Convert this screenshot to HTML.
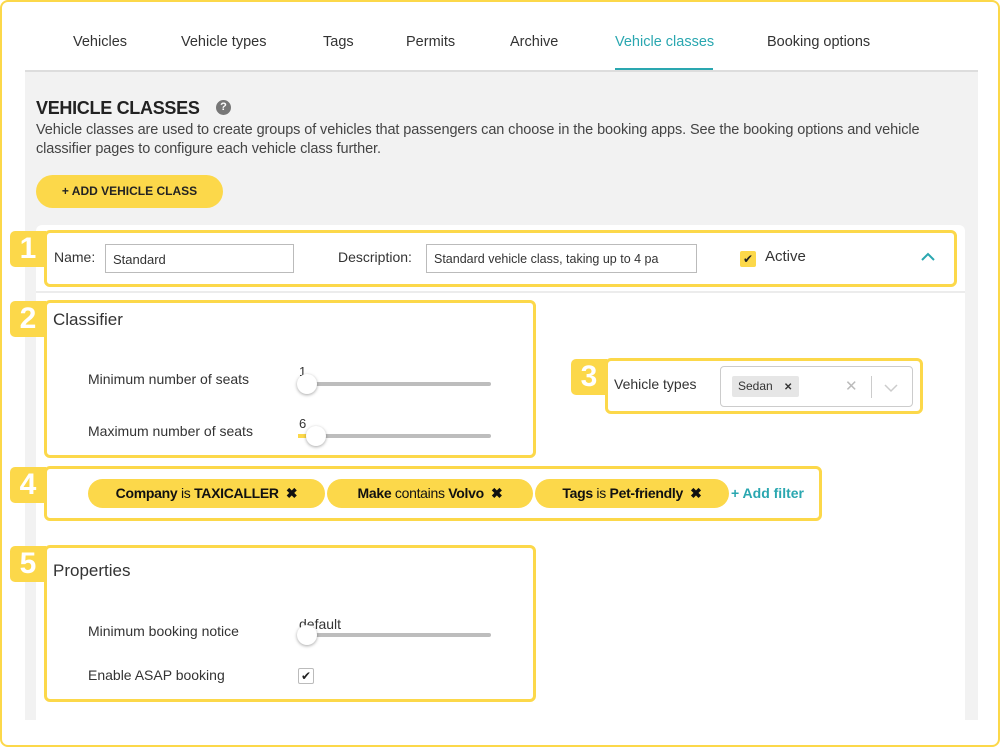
<!DOCTYPE html>
<html><head><meta charset="utf-8"><style>
*{box-sizing:border-box;margin:0;padding:0}
body{width:1000px;height:747px;position:relative;background:#fff;font-family:"Liberation Sans",sans-serif;color:#333;overflow:hidden}
.a{position:absolute;white-space:nowrap}
.frame{left:0;top:0;width:1000px;height:747px;border:2px solid #fcd84a;border-radius:8px}
.tab{top:34px;font-size:14.5px;color:#333}
.yb{border:3px solid #fcd84a;border-radius:6px}
.badge{background:#fcd84a;color:#fff;font-weight:bold;font-size:30px;width:36px;height:36px;text-align:center;line-height:36px;border-radius:5px 0 0 5px}
.lbl{font-size:14px;color:#333}
.track{height:4px;background:#bdbdbd;border-radius:2px}
.knob{width:20px;height:20px;border-radius:50%;background:#fff;box-shadow:0 1px 3px rgba(0,0,0,.35)}
.chip{top:479px;height:29px;background:#fcd84a;border-radius:15px;font-size:14px;color:#111;line-height:29px;text-align:center;letter-spacing:-0.3px}
</style></head><body>
<div class="a frame"></div>
<div class="a tab" style="left:73px">Vehicles</div>
<div class="a tab" style="left:181px">Vehicle types</div>
<div class="a tab" style="left:323px">Tags</div>
<div class="a tab" style="left:406px">Permits</div>
<div class="a tab" style="left:510px">Archive</div>
<div class="a tab" style="left:615px;color:#2aa7b0">Vehicle classes</div>
<div class="a tab" style="left:767px">Booking options</div>
<div class="a" style="left:615px;top:68px;width:98px;height:3px;background:#2aa7b0"></div>
<div class="a" style="left:25px;top:70px;width:953px;height:650px;background:#f2f2f2;border-top:2px solid #ddd"></div>
<div class="a" style="left:36px;top:98px;font-size:18px;font-weight:bold;color:#222;letter-spacing:-0.3px">VEHICLE CLASSES</div>
<div class="a" style="left:216px;top:100px;width:15px;height:15px;border-radius:50%;background:#777;color:#fff;font-size:11px;font-weight:bold;text-align:center;line-height:15px">?</div>
<div class="a" style="left:36px;top:121px;width:930px;font-size:14.5px;line-height:19px;color:#444;white-space:normal;letter-spacing:-0.1px">Vehicle classes are used to create groups of vehicles that passengers can choose in the booking apps. See the booking options and vehicle<br>classifier pages to configure each vehicle class further.</div>
<div class="a" style="left:36px;top:175px;width:187px;height:33px;background:#fcd84a;border-radius:17px;font-size:12px;font-weight:bold;text-align:center;line-height:33px;color:#222">+ ADD VEHICLE CLASS</div>
<div class="a" style="left:36px;top:225px;width:929px;height:495px;background:#fff;border-radius:6px 6px 0 0"></div>
<div class="a" style="left:36px;top:291px;width:929px;height:2px;background:#ececec"></div>
<div class="a badge" style="left:10px;top:231px">1</div>
<div class="a yb" style="left:44px;top:230px;width:913px;height:57px"></div>
<div class="a lbl" style="left:54px;top:249px">Name:</div>
<div class="a" style="left:105px;top:244px;width:189px;height:29px;border:1px solid #bbb;font-size:13px;padding:7px 7px;color:#333">Standard</div>
<div class="a lbl" style="left:338px;top:249px">Description:</div>
<div class="a" style="left:426px;top:244px;width:271px;height:29px;border:1px solid #bbb;font-size:12.5px;padding:7px 7px;color:#333;overflow:hidden">Standard vehicle class, taking up to 4 pa</div>
<div class="a" style="left:740px;top:251px;width:16px;height:16px;background:#fcd84a;border-radius:2px;font-size:12px;text-align:center;line-height:16px;color:#222">✔</div>
<div class="a lbl" style="left:765px;top:248px;font-size:15px">Active</div>
<svg class="a" style="left:920px;top:252px" width="16" height="10"><path d="M2 8 L8 2 L14 8" stroke="#2aa7b0" stroke-width="2" fill="none"/></svg>
<div class="a badge" style="left:10px;top:301px">2</div>
<div class="a yb" style="left:44px;top:300px;width:492px;height:158px"></div>
<div class="a" style="left:53px;top:310px;font-size:17px">Classifier</div>
<div class="a lbl" style="left:88px;top:371px">Minimum number of seats</div>
<div class="a" style="left:299px;top:364px;font-size:13px">1</div>
<div class="a track" style="left:300px;top:382px;width:191px"></div>
<div class="a knob" style="left:297px;top:374px"></div>
<div class="a lbl" style="left:88px;top:423px">Maximum number of seats</div>
<div class="a" style="left:299px;top:416px;font-size:13px">6</div>
<div class="a track" style="left:300px;top:434px;width:191px"></div>
<div class="a" style="left:298px;top:434px;width:10px;height:4px;background:#fcd84a"></div>
<div class="a knob" style="left:306px;top:426px"></div>
<div class="a badge" style="left:571px;top:359px">3</div>
<div class="a yb" style="left:605px;top:358px;width:318px;height:56px"></div>
<div class="a lbl" style="left:614px;top:376px">Vehicle types</div>
<div class="a" style="left:720px;top:366px;width:193px;height:41px;border:1px solid #ccc;border-radius:4px;background:#fff"></div>
<div class="a" style="left:732px;top:376px;width:67px;height:21px;background:#e6e6e6;border-radius:2px;font-size:12px;padding:3px 6px;color:#333">Sedan <b style="margin-left:8px;font-size:10px">✕</b></div>
<div class="a" style="left:845px;top:377px;font-size:15px;color:#bbb">✕</div>
<div class="a" style="left:871px;top:376px;width:1px;height:22px;background:#ccc"></div>
<svg class="a" style="left:883px;top:383px" width="16" height="10"><path d="M2 2 L8 8 L14 2" stroke="#ccc" stroke-width="1.5" fill="none"/></svg>
<div class="a badge" style="left:10px;top:467px">4</div>
<div class="a yb" style="left:44px;top:466px;width:778px;height:55px"></div>
<div class="a chip" style="left:88px;width:237px"><b>Company</b> is <b>TAXICALLER</b> &nbsp;<b>✖</b></div>
<div class="a chip" style="left:327px;width:206px"><b>Make</b> contains <b>Volvo</b> &nbsp;<b>✖</b></div>
<div class="a chip" style="left:535px;width:194px"><b>Tags</b> is <b>Pet-friendly</b> &nbsp;<b>✖</b></div>
<div class="a" style="left:731px;top:485px;font-size:14px;font-weight:bold;color:#2aa7b0">+ Add filter</div>
<div class="a badge" style="left:10px;top:546px">5</div>
<div class="a yb" style="left:44px;top:545px;width:492px;height:157px"></div>
<div class="a" style="left:53px;top:561px;font-size:17px">Properties</div>
<div class="a lbl" style="left:88px;top:623px">Minimum booking notice</div>
<div class="a" style="left:299px;top:616px;font-size:14px">default</div>
<div class="a track" style="left:300px;top:633px;width:191px"></div>
<div class="a knob" style="left:297px;top:625px"></div>
<div class="a lbl" style="left:88px;top:667px">Enable ASAP booking</div>
<div class="a" style="left:298px;top:668px;width:16px;height:16px;border:1px solid #bbb;border-radius:2px;font-size:12px;text-align:center;line-height:14px;color:#222">✔</div>
</body></html>
